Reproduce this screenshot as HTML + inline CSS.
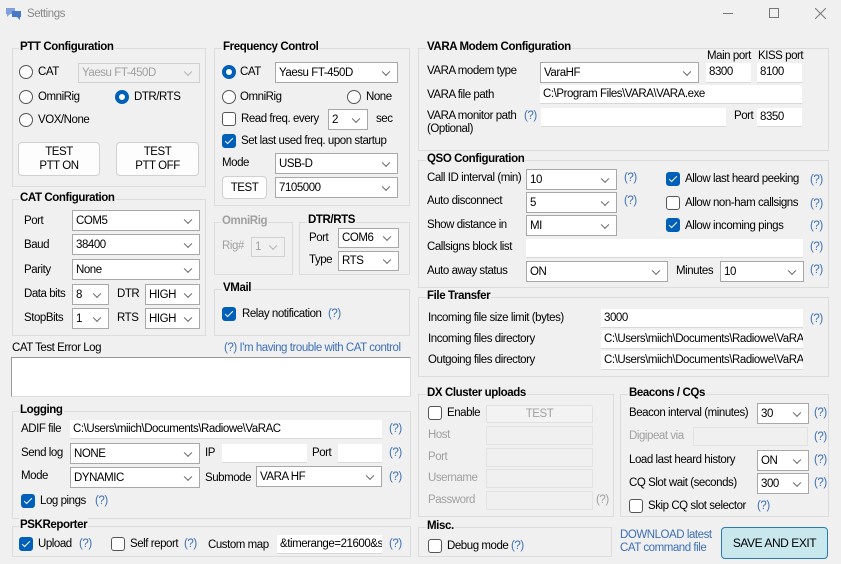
<!DOCTYPE html>
<html><head><meta charset="utf-8"><style>
*{margin:0;padding:0;box-sizing:border-box}
body{width:841px;height:564px;background:#f0f0f0;font-family:"Liberation Sans",Arial,sans-serif;font-size:11.5px;color:#000;position:relative;overflow:hidden}
.l{position:absolute;font-size:11.5px;line-height:14px;white-space:nowrap;letter-spacing:-.45px}
.gr{color:#a0a0a0}
.q{position:absolute;font-size:11.5px;line-height:14px;color:#3b6fb6;white-space:nowrap;letter-spacing:-.45px}
.g{position:absolute;border:1px solid #dcdcdc}
.gt{position:absolute;font-weight:bold;font-size:11.5px;line-height:14px;background:#f0f0f0;padding:0 1px;white-space:nowrap;letter-spacing:-.4px}
.i{position:absolute;background:#fff;border-bottom:1px solid #d8d8d8;font-size:11.5px;line-height:18px;padding-left:3px;white-space:nowrap;overflow:hidden;letter-spacing:-.45px}
.c{position:absolute;background:#fff;border:1px solid #a8a8a8;font-size:11.5px;padding-left:3px;white-space:nowrap;overflow:hidden;display:flex;align-items:center;letter-spacing:-.45px}
.c::after{content:"";position:absolute;right:8px;top:50%;width:5px;height:5px;border-right:1px solid #606060;border-bottom:1px solid #606060;transform:translateY(-70%) rotate(45deg)}
.c.d{background:#f0f0f0;border-color:#d0d0d0;color:#a0a0a0}
.c.d::after{border-color:#b0b0b0}
.r{position:absolute;width:14px;height:14px;border:1px solid #555;border-radius:50%;background:#fff}
.r.on{border:4px solid #005fb8;background:#fff}
.k{position:absolute;width:14px;height:14px;border:1px solid #555;border-radius:3px;background:#fff}
.k.on{background:#005fb8;border-color:#005fb8}
.k.on::after{content:"";position:absolute;left:4px;top:1px;width:3px;height:7px;border-right:1.5px solid #fff;border-bottom:1.5px solid #fff;transform:rotate(45deg)}
.b{position:absolute;background:#fdfdfd;border:1px solid #d0d0d0;border-radius:4px;text-align:center;font-size:11.5px;letter-spacing:-.45px;display:flex;align-items:center;justify-content:center;line-height:14px}
</style></head><body>
<svg style="position:absolute;left:5px;top:6px" width="17" height="14" viewBox="0 0 17 14"><path d="M1 2h9v6H5l-3 3V8H1z" fill="#7fa0d8"/><path d="M7 5h9v6h-1v3l-3-3H7z" fill="#4a78c8"/></svg>
<div class="l" style="left:27px;top:7px;color:#888">Settings</div>
<div style="position:absolute;left:723px;top:13px;width:10px;height:1px;background:#777"></div>
<div style="position:absolute;left:769px;top:8px;width:10px;height:10px;border:1px solid #777"></div>
<svg style="position:absolute;left:815px;top:8px" width="11" height="11"><path d="M0 0L11 11M11 0L0 11" stroke="#777" stroke-width="1"/></svg>

<div class="g" style="left:12px;top:48px;width:194px;height:139px"></div>
<div class="gt" style="left:19px;top:40px">PTT Configuration</div>
<div class="r" style="left:19px;top:65px"></div><div class="l" style="left:38px;top:65px">CAT</div>
<div class="c d" style="left:78px;top:63px;width:122px;height:20px">Yaesu FT-450D</div>
<div class="r" style="left:19px;top:90px"></div><div class="l" style="left:38px;top:90px">OmniRig</div>
<div class="r on" style="left:115px;top:90px"></div><div class="l" style="left:134px;top:90px">DTR/RTS</div>
<div class="r" style="left:19px;top:113px"></div><div class="l" style="left:38px;top:113px">VOX/None</div>
<div class="b" style="left:18px;top:142px;width:82px;height:34px">TEST<br>PTT ON</div>
<div class="b" style="left:116px;top:142px;width:83px;height:34px">TEST<br>PTT OFF</div>

<div class="g" style="left:12px;top:199px;width:194px;height:137px"></div>
<div class="gt" style="left:19px;top:191px">CAT Configuration</div>
<div class="l" style="left:24px;top:214px">Port</div><div class="c" style="left:72px;top:210px;width:128px;height:21px">COM5</div>
<div class="l" style="left:24px;top:238px">Baud</div><div class="c" style="left:72px;top:234px;width:128px;height:21px">38400</div>
<div class="l" style="left:24px;top:263px">Parity</div><div class="c" style="left:72px;top:259px;width:128px;height:21px">None</div>
<div class="l" style="left:24px;top:287px">Data bits</div><div class="c" style="left:72px;top:284px;width:37px;height:21px">8</div>
<div class="l" style="left:117px;top:287px">DTR</div><div class="c" style="left:145px;top:284px;width:55px;height:21px">HIGH</div>
<div class="l" style="left:24px;top:311px">StopBits</div><div class="c" style="left:72px;top:308px;width:37px;height:21px">1</div>
<div class="l" style="left:117px;top:311px">RTS</div><div class="c" style="left:145px;top:308px;width:55px;height:21px">HIGH</div>

<div class="l" style="left:12px;top:341px">CAT Test Error Log</div>
<div class="q" style="left:224px;top:341px">(?) I'm having trouble with CAT control</div>
<div style="position:absolute;left:11px;top:357px;width:400px;height:40px;background:#fff;border:1px solid #999;border-bottom-color:#ddd;border-right-color:#ddd"></div>

<div class="g" style="left:12px;top:411px;width:399px;height:108px"></div>
<div class="gt" style="left:19px;top:403px">Logging</div>
<div class="l" style="left:21px;top:422px">ADIF file</div><div class="i" style="left:70px;top:420px;width:312px;height:19px">C:\Users\miich\Documents\Radiowe\VaRAC</div><div class="q" style="left:389px;top:422px">(?)</div>
<div class="l" style="left:21px;top:446px">Send log</div><div class="c" style="left:70px;top:443px;width:130px;height:21px">NONE</div>
<div class="l" style="left:205px;top:446px">IP</div><div class="i" style="left:222px;top:444px;width:85px;height:19px"></div>
<div class="l" style="left:312px;top:446px">Port</div><div class="i" style="left:338px;top:444px;width:44px;height:19px"></div><div class="q" style="left:389px;top:446px">(?)</div>
<div class="l" style="left:21px;top:469px">Mode</div><div class="c" style="left:70px;top:467px;width:130px;height:21px">DYNAMIC</div>
<div class="l" style="left:205px;top:471px">Submode</div><div class="c" style="left:256px;top:466px;width:126px;height:21px">VARA HF</div><div class="q" style="left:389px;top:470px">(?)</div>
<div class="k on" style="left:21px;top:494px"></div><div class="l" style="left:40px;top:494px">Log pings</div><div class="q" style="left:95px;top:494px">(?)</div>

<div class="g" style="left:12px;top:526px;width:399px;height:31px"></div>
<div class="gt" style="left:19px;top:518px">PSKReporter</div>
<div class="k on" style="left:19px;top:537px"></div><div class="l" style="left:38px;top:537px">Upload</div><div class="q" style="left:79px;top:537px">(?)</div>
<div class="k" style="left:111px;top:537px"></div><div class="l" style="left:130px;top:537px">Self report</div><div class="q" style="left:184px;top:537px">(?)</div>
<div class="l" style="left:208px;top:538px">Custom map</div><div class="i" style="left:277px;top:535px;width:105px;height:19px">&amp;timerange=21600&amp;s</div><div class="q" style="left:389px;top:537px">(?)</div>

<div class="g" style="left:214px;top:48px;width:196px;height:158px"></div>
<div class="gt" style="left:222px;top:40px">Frequency Control</div>
<div class="r on" style="left:222px;top:65px"></div><div class="l" style="left:240px;top:65px">CAT</div>
<div class="c" style="left:275px;top:62px;width:123px;height:21px">Yaesu FT-450D</div>
<div class="r" style="left:222px;top:90px"></div><div class="l" style="left:240px;top:90px">OmniRig</div>
<div class="r" style="left:347px;top:90px"></div><div class="l" style="left:366px;top:90px">None</div>
<div class="k" style="left:222px;top:112px"></div><div class="l" style="left:241px;top:112px">Read freq. every</div>
<div class="c" style="left:328px;top:109px;width:40px;height:21px">2</div><div class="l" style="left:376px;top:112px">sec</div>
<div class="k on" style="left:222px;top:134px"></div><div class="l" style="left:241px;top:134px">Set last used freq. upon startup</div>
<div class="l" style="left:222px;top:156px">Mode</div><div class="c" style="left:275px;top:153px;width:123px;height:21px">USB-D</div>
<div class="b" style="left:222px;top:176px;width:45px;height:23px">TEST</div>
<div class="c" style="left:275px;top:177px;width:123px;height:21px">7105000</div>

<div class="g" style="left:214px;top:222px;width:79px;height:53px"></div>
<div class="gt" style="left:221px;top:214px;color:#a0a0a0">OmniRig</div>
<div class="l gr" style="left:222px;top:239px">Rig#</div><div class="c d" style="left:251px;top:237px;width:34px;height:20px">1</div>
<div class="g" style="left:299px;top:222px;width:111px;height:53px"></div>
<div class="gt" style="left:307px;top:213px">DTR/RTS</div>
<div class="l" style="left:309px;top:231px">Port</div><div class="c" style="left:338px;top:228px;width:61px;height:20px">COM6</div>
<div class="l" style="left:309px;top:253px">Type</div><div class="c" style="left:338px;top:251px;width:61px;height:20px">RTS</div>
<div class="g" style="left:214px;top:289px;width:196px;height:47px"></div>
<div class="gt" style="left:222px;top:281px">VMail</div>
<div class="k on" style="left:222px;top:307px"></div><div class="l" style="left:242px;top:307px">Relay notification</div><div class="q" style="left:328px;top:307px">(?)</div>

<div class="g" style="left:418px;top:48px;width:411px;height:103px"></div>
<div class="gt" style="left:426px;top:40px">VARA Modem Configuration</div>
<div class="l" style="left:707px;top:49px">Main port</div><div class="l" style="left:758px;top:49px">KISS port</div>
<div class="l" style="left:427px;top:64px">VARA modem type</div>
<div class="c" style="left:540px;top:62px;width:159px;height:21px">VaraHF</div>
<div class="i" style="left:706px;top:63px;width:45px;height:20px">8300</div>
<div class="i" style="left:757px;top:63px;width:45px;height:20px">8100</div>
<div class="l" style="left:427px;top:88px">VARA file path</div>
<div class="i" style="left:540px;top:85px;width:262px;height:19px">C:\Program Files\VARA\VARA.exe</div>
<div class="l" style="left:427px;top:109px">VARA monitor path</div><div class="q" style="left:524px;top:109px">(?)</div>
<div class="l" style="left:427px;top:122px">(Optional)</div>
<div class="i" style="left:541px;top:108px;width:185px;height:19px"></div>
<div class="l" style="left:734px;top:109px">Port</div>
<div class="i" style="left:757px;top:108px;width:45px;height:19px">8350</div>

<div class="g" style="left:418px;top:160px;width:411px;height:128px"></div>
<div class="gt" style="left:426px;top:152px">QSO Configuration</div>
<div class="l" style="left:427px;top:171px">Call ID interval (min)</div><div class="c" style="left:526px;top:169px;width:91px;height:21px">10</div><div class="q" style="left:624px;top:171px">(?)</div>
<div class="l" style="left:427px;top:194px">Auto disconnect</div><div class="c" style="left:526px;top:192px;width:91px;height:21px">5</div><div class="q" style="left:624px;top:194px">(?)</div>
<div class="l" style="left:427px;top:218px">Show distance in</div><div class="c" style="left:526px;top:215px;width:91px;height:21px">MI</div>
<div class="k on" style="left:666px;top:172px"></div><div class="l" style="left:685px;top:172px">Allow last heard peeking</div><div class="q" style="left:810px;top:173px">(?)</div>
<div class="k" style="left:666px;top:196px"></div><div class="l" style="left:685px;top:196px">Allow non-ham callsigns</div><div class="q" style="left:810px;top:197px">(?)</div>
<div class="k on" style="left:666px;top:218px"></div><div class="l" style="left:685px;top:219px">Allow incoming pings</div><div class="q" style="left:810px;top:219px">(?)</div>
<div class="l" style="left:427px;top:240px">Callsigns block list</div><div class="i" style="left:526px;top:239px;width:277px;height:19px"></div><div class="q" style="left:810px;top:240px">(?)</div>
<div class="l" style="left:427px;top:264px">Auto away status</div><div class="c" style="left:526px;top:261px;width:142px;height:21px">ON</div>
<div class="l" style="left:676px;top:264px">Minutes</div><div class="c" style="left:720px;top:261px;width:84px;height:21px">10</div><div class="q" style="left:810px;top:263px">(?)</div>

<div class="g" style="left:418px;top:297px;width:411px;height:80px"></div>
<div class="gt" style="left:426px;top:289px">File Transfer</div>
<div class="l" style="left:428px;top:311px">Incoming file size limit (bytes)</div><div class="i" style="left:601px;top:309px;width:202px;height:19px">3000</div><div class="q" style="left:810px;top:312px">(?)</div>
<div class="l" style="left:428px;top:332px">Incoming files directory</div><div class="i" style="left:601px;top:330px;width:202px;height:19px">C:\Users\miich\Documents\Radiowe\VaRAC</div>
<div class="l" style="left:428px;top:353px">Outgoing files directory</div><div class="i" style="left:601px;top:351px;width:202px;height:19px">C:\Users\miich\Documents\Radiowe\VaRAC</div>

<div class="g" style="left:418px;top:394px;width:196px;height:123px"></div>
<div class="gt" style="left:426px;top:386px">DX Cluster uploads</div>
<div class="k" style="left:428px;top:406px"></div><div class="l" style="left:447px;top:406px">Enable</div>
<div class="b" style="left:486px;top:405px;width:107px;height:18px;background:#f3f3f3;border-color:#e0e0e0;color:#a0a0a0;border-radius:2px">TEST</div>
<div class="l gr" style="left:428px;top:428px">Host</div><div class="i" style="left:486px;top:426px;width:107px;height:19px;background:#f0f0f0;border:1px solid #e2e2e2"></div>
<div class="l gr" style="left:428px;top:450px">Port</div><div class="i" style="left:486px;top:448px;width:107px;height:19px;background:#f0f0f0;border:1px solid #e2e2e2"></div>
<div class="l gr" style="left:428px;top:471px">Username</div><div class="i" style="left:486px;top:469px;width:107px;height:19px;background:#f0f0f0;border:1px solid #e2e2e2"></div>
<div class="l gr" style="left:428px;top:493px">Password</div><div class="i" style="left:486px;top:491px;width:107px;height:19px;background:#f0f0f0;border:1px solid #e2e2e2"></div><div class="l gr" style="left:596px;top:493px">(?)</div>

<div class="g" style="left:620px;top:394px;width:209px;height:123px"></div>
<div class="gt" style="left:628px;top:386px">Beacons / CQs</div>
<div class="l" style="left:629px;top:406px">Beacon interval (minutes)</div><div class="c" style="left:757px;top:403px;width:52px;height:21px">30</div><div class="q" style="left:814px;top:406px">(?)</div>
<div class="l gr" style="left:629px;top:429px">Digipeat via</div><div class="i" style="left:693px;top:427px;width:115px;height:19px;background:#f0f0f0;border:1px solid #e2e2e2"></div><div class="q" style="left:814px;top:430px">(?)</div>
<div class="l" style="left:629px;top:453px">Load last heard history</div><div class="c" style="left:757px;top:450px;width:52px;height:21px">ON</div><div class="q" style="left:814px;top:453px">(?)</div>
<div class="l" style="left:629px;top:476px">CQ Slot wait (seconds)</div><div class="c" style="left:757px;top:473px;width:52px;height:21px">300</div><div class="q" style="left:814px;top:476px">(?)</div>
<div class="k" style="left:629px;top:499px"></div><div class="l" style="left:648px;top:499px">Skip CQ slot selector</div><div class="q" style="left:757px;top:499px">(?)</div>

<div class="g" style="left:418px;top:527px;width:194px;height:30px"></div>
<div class="gt" style="left:426px;top:519px">Misc.</div>
<div class="k" style="left:428px;top:539px"></div><div class="l" style="left:447px;top:539px">Debug mode</div><div class="q" style="left:511px;top:539px">(?)</div>

<div class="q" style="left:620px;top:529px;line-height:13px">DOWNLOAD latest<br>CAT command file</div>
<div class="b" style="left:721px;top:527px;width:107px;height:32px;background:#c9e8ee;border:1px solid #2a7ab0;border-radius:4px;font-size:12px">SAVE AND EXIT</div>
</body></html>
